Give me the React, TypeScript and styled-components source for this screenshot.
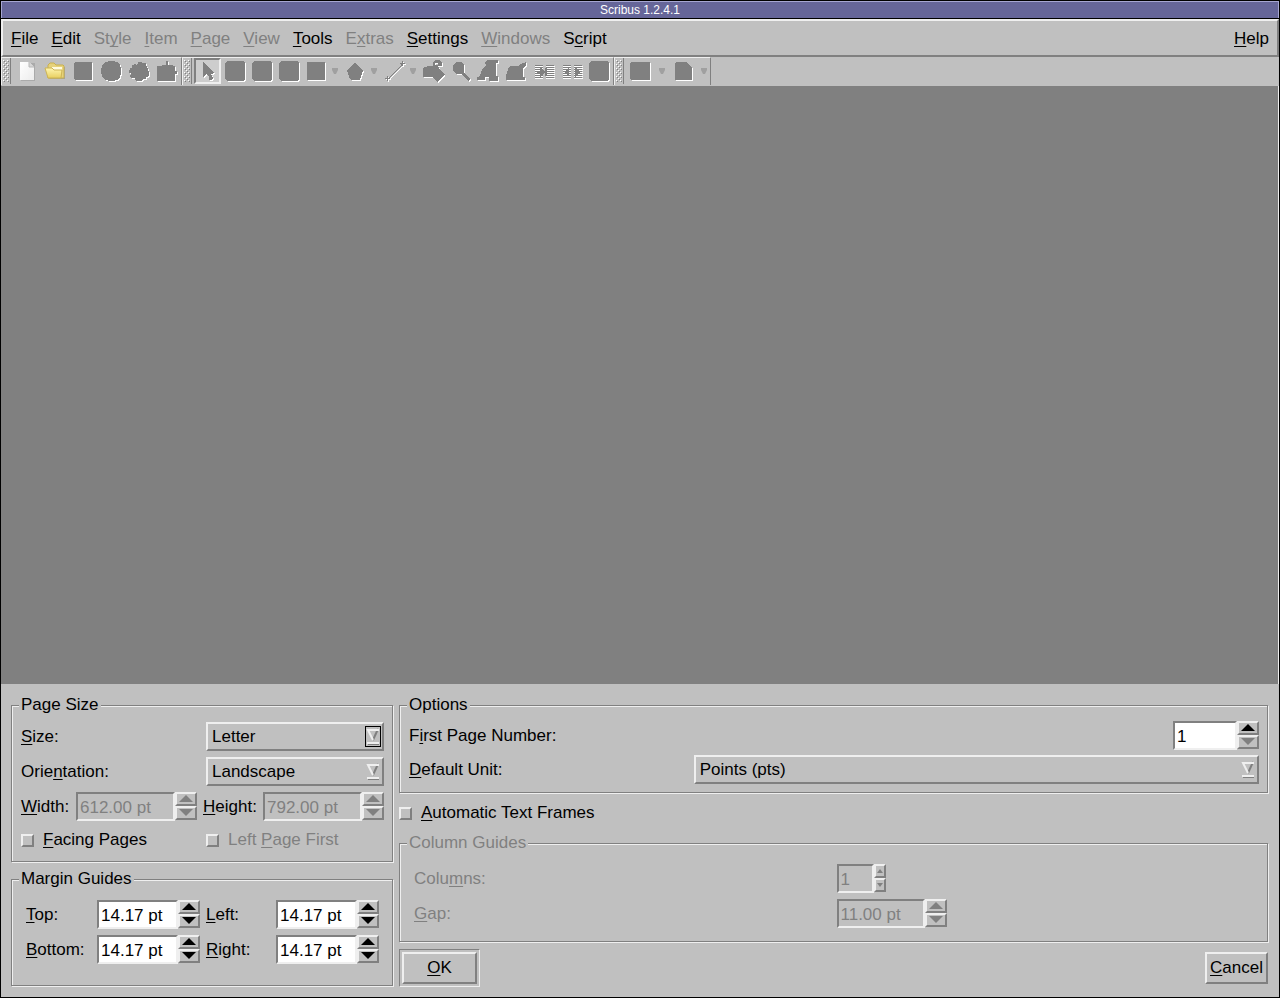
import React, { useState } from "react";
import styled, { createGlobalStyle, css } from "styled-components";

const face = "#c0c0c0";
const light = "#efefef";
const dark = "#808080";

const raised = css`
  border: 2px solid;
  border-color: ${light} ${dark} ${dark} ${light};
`;
const sunken = css`
  border: 2px solid;
  border-color: ${dark} ${light} ${light} ${dark};
`;

const GlobalStyle = createGlobalStyle`
  * { box-sizing: border-box; }
  body { margin: 0; background: ${face}; }
  body, button, input, select {
    font-family: "Liberation Sans", Arial, sans-serif;
    font-size: 17px;
    line-height: 20px;
    color: #000;
  }
  u {
    text-decoration-thickness: 1px;
    text-underline-offset: 2px;
    text-decoration-skip-ink: none;
  }
`;

const Window = styled.div`
  min-height: 100vh;
  display: flex;
  flex-direction: column;
  border: 1px solid #000;
  background: ${face};
`;

const TitleBar = styled.header`
  height: 18px;
  border: 1px solid #a6a6d2;
  background: #666699;
  color: #fff;
  font-size: 12px;
  line-height: 16px;
  text-align: center;
`;

const MenuBar = styled.nav`
  ${raised}
  height: 38px;
  display: flex;
  align-items: center;
  padding: 2px 1px 0 2px;
  box-shadow: 0 -1px 0 #000;
  position: relative;
`;

const MenuButton = styled.button`
  border: 0;
  background: none;
  padding: 0 7px 0 6px;
  &:disabled { color: ${dark}; }
  &:last-child { margin-left: auto; }
`;

const ToolArea = styled.div`
  display: flex;
  height: 29px;
`;

const ToolGroup = styled.div`
  display: flex;
  align-items: flex-start;
  height: 28px;
  border-top: 1px solid ${light};
  border-left: 1px solid ${light};
  border-right: 1px solid ${dark};
`;

const GripBox = styled.div`
  width: 9px;
  height: 26px;
  margin-right: 2px;
  padding: 2px 0 0 1px;
  border-right: 1px solid ${dark};
`;

const ToolButton = styled.button<{ $wide?: boolean; $pressed?: boolean }>`
  width: ${(p) => (p.$wide ? 28 : 27)}px;
  height: 26px;
  padding: 0;
  border: 0;
  background: none;
  display: flex;
  align-items: center;
  justify-content: center;
  & > svg { flex: none; }
  ${(p) => p.$pressed && css`${sunken} background: #cdcdcd;`}
`;

const DropButton = styled.button<{ $wide?: boolean }>`
  width: ${(p) => (p.$wide ? 16 : 12)}px;
  height: 26px;
  padding: 0;
  border: 0;
  background: none;
  display: flex;
  align-items: center;
  justify-content: center;
`;

const Workspace = styled.main`
  flex: 1;
  background: ${dark};
  border-right: 1px solid ${light};
`;

const Dialog = styled.form`
  display: grid;
  grid-template-columns: 382px 1fr;
  gap: 6px;
  align-items: start;
  padding: 11px 11px 10px 10px;
`;

const Column = styled.div`
  display: flex;
  flex-direction: column;
  gap: 7px;
  min-width: 0;
`;

const Group = styled.fieldset`
  min-width: 0;
  margin: 0;
  padding: 0 7px;
  border: 1px solid ${dark};
  box-shadow: inset 1px 1px 0 ${light}, 1px 1px 0 ${light};
  &:disabled { color: ${dark}; }
`;

const Legend = styled.legend`
  padding: 0 2px;
  background: ${face};
`;

const SizeBody = styled.div`
  display: flex;
  flex-direction: column;
  gap: 6px;
  padding: 7px 1px 8px 2px;
`;

const LabelRow = styled.div`
  display: grid;
  grid-template-columns: 185px 1fr;
  align-items: center;
`;

const CheckRow = styled(LabelRow)`
  height: 26px;
`;

const DimensionRow = styled.div`
  display: grid;
  grid-template-columns: 55px 121px 66px 121px;
  align-items: center;
`;

const MarginBody = styled.div`
  display: grid;
  grid-template-columns: 71px 103px 76px 103px;
  row-gap: 6px;
  align-items: center;
  padding: 11px 1px 21px 7px;
`;

const OptionBody = styled.div`
  display: flex;
  flex-direction: column;
  gap: 5px;
  padding: 6px 1px 8px 2px;
`;

const NumberRow = styled.div`
  display: flex;
  align-items: center;
  justify-content: space-between;
`;

const UnitRow = styled.div`
  display: grid;
  grid-template-columns: 1fr 2fr;
  column-gap: 2px;
  align-items: center;
`;

const GuideBody = styled.div`
  display: grid;
  grid-template-columns: 1fr 1fr;
  row-gap: 6px;
  align-items: center;
  padding: 11px 1px 13px 7px;
`;

const FieldLabel = styled.label<{ $indent?: boolean }>`
  white-space: nowrap;
  padding-left: ${(p) => (p.$indent ? 6 : 0)}px;
`;

const CheckLabel = styled.label<{ $off?: boolean }>`
  display: flex;
  align-items: center;
  gap: 9px;
  color: ${(p) => (p.$off ? dark : "#000")};
`;

const CheckBox = styled.input`
  ${raised}
  appearance: none;
  width: 13px;
  height: 13px;
  margin: 0;
  &:checked { ${sunken} background: #a0a0a0; }
`;

const AutoRow = styled.div`
  display: flex;
  padding: 3px 0;
`;

const ComboFrame = styled.div`
  ${raised}
  height: 29px;
  display: grid;
  align-items: center;
  & > * { grid-area: 1 / 1; }
`;

const ComboSelect = styled.select`
  appearance: none;
  width: 100%;
  height: 25px;
  border: 0;
  padding: 0 24px 0 4px;
  background: none;
  outline: 0;
`;

const ComboMark = styled.svg`
  justify-self: end;
  margin-right: 1px;
  pointer-events: none;
`;

const SpinFrame = styled.div<{ $width: number }>`
  display: flex;
  width: ${(p) => p.$width}px;
  height: 29px;
`;

const SpinInput = styled.input`
  ${sunken}
  flex: 1;
  min-width: 0;
  padding: 2px 0 0 2px;
  border-radius: 0;
  background: #fff;
  outline: 0;
  &:disabled { background: ${face}; color: ${dark}; }
`;

const SpinButtons = styled.div<{ $small?: boolean }>`
  width: ${(p) => (p.$small ? 12 : 22)}px;
  display: grid;
  grid-template-rows: 14px 14px;
`;

const SpinButton = styled.button`
  ${raised}
  padding: 0;
  background: ${face};
  color: #000;
  display: flex;
  align-items: center;
  justify-content: center;
  &:disabled { color: ${dark}; }
`;

const Actions = styled.div`
  display: flex;
  justify-content: space-between;
  align-items: center;
`;

const DefaultRing = styled.div`
  border: 1px solid;
  border-color: ${dark} ${light} ${light} ${dark};
  padding: 2px;
`;

const PushButton = styled.button<{ $width: number }>`
  ${raised}
  width: ${(p) => p.$width}px;
  height: 32px;
  padding: 0;
  background: ${face};
`;

/* Text in which one character is the underlined keyboard shortcut. */
function Mnemonic({ text }: { text: string }) {
  const at = text.indexOf("&");
  return (
    <span>
      {text.slice(0, at)}
      <u>{text[at + 1]}</u>
      {text.slice(at + 2)}
    </span>
  );
}

function Arrow({ down, small }: { down?: boolean; small?: boolean }) {
  if (small) {
    return (
      <svg width="6" height="4" viewBox="0 0 6 4">
        <path d={down ? "M0 0H6L3 4Z" : "M0 4H6L3 0Z"} fill="currentColor" />
      </svg>
    );
  }
  return (
    <svg width="14" height="8" viewBox="0 0 14 8">
      <path d={down ? "M0 0H14L7 7Z" : "M0 7H14L7 0Z"} fill="currentColor" />
    </svg>
  );
}

interface SpinProps {
  id: string;
  value: string;
  width: number;
  disabled?: boolean;
  small?: boolean;
  atMin?: boolean;
}

function Spin({ id, value, width, disabled, small, atMin }: SpinProps) {
  const [current, setCurrent] = useState(value);
  const step = (by: number) => {
    const [number, unit] = current.split(" ");
    const next = Number(number) + by;
    setCurrent(unit ? `${next.toFixed(2)} ${unit}` : String(next));
  };
  return (
    <SpinFrame $width={width}>
      <SpinInput id={id} value={current} disabled={disabled} onChange={(e) => setCurrent(e.target.value)} />
      <SpinButtons $small={small}>
        <SpinButton type="button" aria-label="Increase" disabled={disabled} onClick={() => step(1)}>
          <Arrow small={small} />
        </SpinButton>
        <SpinButton
          type="button"
          aria-label="Decrease"
          disabled={disabled || (atMin && current === value)}
          onClick={() => step(-1)}
        >
          <Arrow down small={small} />
        </SpinButton>
      </SpinButtons>
    </SpinFrame>
  );
}

function Combo({ id, options, focused }: { id: string; options: string[]; focused?: boolean }) {
  return (
    <ComboFrame>
      <ComboSelect id={id}>
        {options.map((o) => (
          <option key={o}>{o}</option>
        ))}
      </ComboSelect>
      <ComboMark width="16" height="21" viewBox="0 0 16 21">
        {focused && <rect x="0.5" y="0.5" width="15" height="20" fill="none" stroke="#000" />}
        <path d="M13 3L8 14" fill="none" stroke={dark} strokeWidth="2" />
        <path d="M14 4H3L8 14" fill="none" stroke={light} strokeWidth="2" />
        <path d="M2 16h12v1H3v1H2z" fill={light} />
        <path d="M3 17h11v2H3z" fill={dark} />
        <path d="M3 16h11v2H3z" fill={light} />
      </ComboMark>
    </ComboFrame>
  );
}

const shapes = {
  frame: "M4 3H20L21 4V20L20 21H4L3 20V4Z",
  circle: "M9 2H15L16 3H18L21 6V8L22 9V15L21 16V18L18 21H16L15 22H9L8 21H6L3 18V16L2 15V9L3 8V6L6 3H8Z",
  blob: "M7 5H8L9 6H10V5L11 4V3H15V4H18L19 5V7H20V9H21V12H22V17H21V18H19V20H16V21H15V22H9V21H8V19H4V18H3V16H4V14H2V11H3V9H5V6H7Z",
  puzzle: "M2 22V7H6L7 6H11V2H13V6H17L18 7H20V12H22V15H20V22Z",
  pointer: "M7 3V18L11 15L13 18V21H15L17 19L15 15L19 14Z",
  tile: "M4 2H20L22 4V20L20 22H4L2 20V4Z",
  square: "M3 3H21V21H3Z",
  pentagon: "M11 4H13L20 12L17 20L16 21H8L7 20L4 12Z",
  line: "M5 18V17H6V19L19 6V5H18V4H20V2H21V4H23V5H21V7H20V6L7 19H8V20H6V22H5V20H3V19H5Z",
  rotate: "M2 9L3 8H6V7H9L14 6H17L18 10L20 11L24 16L16 23L11 18H2ZM11 4L14 1H18L20 3L21 3V7H17V5L16 4H14V6H12V4Z",
  lens: "M7 3H12L15 6V12L14 13L21 20L19 22L12 15H7L4 12V6Z",
  text: "M1 21V18H3L7 9L10 6L9 5V3L11 1H22V4H20V17H22V22H13V18H9V21Z",
  edit: "M2 21V16L5 8L7 7H15L16 5L20 4L22 2V6L19 9V18H21V21Z",
  wide: "M3 3H21L22 4V20L21 21H3L2 20V4Z",
  note: "M4 3H14L20 9V21H3V4Z",
};
const striped = [6, 8, 10, 12, 14, 16, 18];

function DisabledIcon({ name }: { name: keyof typeof shapes }) {
  return (
    <svg width="24" height="24" viewBox="0 0 24 24" shapeRendering="crispEdges">
      <path d={shapes[name]} fill="#fff" transform="translate(1 1)" />
      <path d={shapes[name]} fill={dark} />
    </svg>
  );
}

function LinkIcon({ apart }: { apart?: boolean }) {
  return (
    <svg width="24" height="24" viewBox="0 0 24 24" shapeRendering="crispEdges">
      {striped.map((y) => (
        <g key={y}>
          <path d={`M3 ${y + 1}h8v1H3zM14 ${y + 1}h9v1h-9z`} fill="#fff" />
          <path d={`M3 ${y}h8v1H3zM14 ${y}h8v1h-8z`} fill={dark} />
        </g>
      ))}
      {apart ? (
        <path d="M9 8V18L4 13ZM15 8V18L20 13Z" fill={dark} />
      ) : (
        <path d="M8 8L13 13L8 18V14H5V12H8ZM13 9h2v8h-2z" fill={dark} />
      )}
    </svg>
  );
}

/* Drag handle: three staggered columns of embossed dots. */
function Grip() {
  const dots: [number, number][] = [];
  for (let y = 0; y < 22; y += 4) {
    dots.push([0, y], [4, y]);
    if (y < 20) dots.push([2, y + 2]);
  }
  return (
    <GripBox>
      <svg width="6" height="23" viewBox="0 0 6 23" shapeRendering="crispEdges" display="block">
        {dots.map(([x, y]) => (
          <g key={`${x}-${y}`}>
            <path d={`M${x} ${y}h1v1h-1z`} fill="#fff" />
            <path d={`M${x + 1} ${y + 1}h1v1h-1z`} fill={dark} />
          </g>
        ))}
      </svg>
    </GripBox>
  );
}

const NewIcon = () => (
  <svg width="24" height="24" viewBox="0 0 24 24">
    <defs>
      <linearGradient id="sheet" x1="0" y1="0" x2="1" y2="1">
        <stop offset="0" stopColor="#fff" />
        <stop offset="1" stopColor="#ececec" />
      </linearGradient>
    </defs>
    <path d="M6 4H20V22H6Z" fill="#aaa" />
    <path d="M5 3H14L19 8V21H5Z" fill="url(#sheet)" />
    <path d="M14 3L19 8H14Z" fill="#d6d6d6" />
    <path d="M14 3V8H19" fill="none" stroke="#b8b8b8" />
  </svg>
);

const OpenIcon = () => (
  <svg width="24" height="24" viewBox="0 0 24 24">
    <defs>
      <linearGradient id="folder" x1="0" y1="0" x2="0" y2="1">
        <stop offset="0" stopColor="#fff6b0" />
        <stop offset="1" stopColor="#e8cf60" />
      </linearGradient>
    </defs>
    <path d="M6 19H21V8H22V20H7Z" fill="#a0a0a0" />
    <path d="M5 19V6L7 4H11L13 6H20L21 7V19Z" fill="#e6d27c" stroke="#c9b04c" />
    <path d="M9 8H19V11H9Z" fill="#fffbe0" />
    <path d="M2 9H9L11 11H19L18 19H5Z" fill="url(#folder)" stroke="#cdb455" />
  </svg>
);

const DropArrow = () => (
  <svg width="6" height="6" viewBox="0 0 6 6">
    <path d="M0 0H6V2L4 6H2L0 2Z" fill="#a0a0a0" />
  </svg>
);

function Tool({ label, icon, wide, pressed }: { label: string; icon: keyof typeof shapes; wide?: boolean; pressed?: boolean }) {
  return (
    <ToolButton type="button" aria-label={label} disabled $wide={wide} $pressed={pressed}>
      <DisabledIcon name={icon} />
    </ToolButton>
  );
}

function Drop({ label, wide }: { label: string; wide?: boolean }) {
  return (
    <DropButton type="button" aria-label={label} disabled $wide={wide}>
      <DropArrow />
    </DropButton>
  );
}

const menus: [string, boolean][] = [
  ["&File", true],
  ["&Edit", true],
  ["St&yle", false],
  ["&Item", false],
  ["&Page", false],
  ["&View", false],
  ["&Tools", true],
  ["E&xtras", false],
  ["&Settings", true],
  ["&Windows", false],
  ["S&cript", true],
  ["&Help", true],
];

export default function App() {
  return (
    <Window>
      <GlobalStyle />
      <TitleBar>Scribus 1.2.4.1</TitleBar>
      <MenuBar>
        {menus.map(([text, enabled]) => (
          <MenuButton key={text} type="button" disabled={!enabled}>
            <Mnemonic text={text} />
          </MenuButton>
        ))}
      </MenuBar>
      <ToolArea>
        <ToolGroup>
          <Grip />
          <ToolButton type="button" aria-label="New" $wide>
            <NewIcon />
          </ToolButton>
          <ToolButton type="button" aria-label="Open" $wide>
            <OpenIcon />
          </ToolButton>
          <Tool label="Save" icon="frame" wide />
          <Tool label="Close" icon="circle" wide />
          <Tool label="Print" icon="blob" wide />
          <Tool label="Export as PDF" icon="puzzle" wide />
        </ToolGroup>
        <ToolGroup>
          <Grip />
          <Tool label="Select" icon="pointer" pressed />
          <Tool label="Text frame" icon="tile" />
          <Tool label="Picture frame" icon="tile" />
          <Tool label="Table" icon="tile" />
          <Tool label="Shape" icon="square" />
          <Drop label="Shape kinds" />
          <Tool label="Polygon" icon="pentagon" />
          <Drop label="Polygon options" />
          <Tool label="Line" icon="line" />
          <Drop label="Line kinds" />
          <Tool label="Rotate" icon="rotate" wide />
          <Tool label="Zoom" icon="lens" />
          <Tool label="Edit contents" icon="text" wide />
          <Tool label="Edit text" icon="edit" wide />
          <ToolButton type="button" aria-label="Link frames" disabled $wide>
            <LinkIcon />
          </ToolButton>
          <ToolButton type="button" aria-label="Unlink frames" disabled>
            <LinkIcon apart />
          </ToolButton>
          <Tool label="Measure" icon="tile" wide />
        </ToolGroup>
        <ToolGroup>
          <Grip />
          <Tool label="PDF field" icon="wide" wide />
          <Drop label="PDF field kinds" wide />
          <Tool label="PDF note" icon="note" wide />
          <Drop label="PDF note kinds" />
        </ToolGroup>
      </ToolArea>
      <Workspace />
      <Dialog onSubmit={(e) => e.preventDefault()}>
        <Column>
          <Group>
            <Legend>Page Size</Legend>
            <SizeBody>
              <LabelRow>
                <FieldLabel htmlFor="size"><Mnemonic text="&Size:" /></FieldLabel>
                <Combo id="size" options={["Letter", "A4", "Legal"]} focused />
              </LabelRow>
              <LabelRow>
                <FieldLabel htmlFor="orientation"><Mnemonic text="Orie&ntation:" /></FieldLabel>
                <Combo id="orientation" options={["Landscape", "Portrait"]} />
              </LabelRow>
              <DimensionRow>
                <FieldLabel htmlFor="width"><Mnemonic text="&Width:" /></FieldLabel>
                <Spin id="width" value="612.00 pt" width={121} disabled />
                <FieldLabel htmlFor="height" $indent><Mnemonic text="&Height:" /></FieldLabel>
                <Spin id="height" value="792.00 pt" width={121} disabled />
              </DimensionRow>
              <CheckRow>
                <CheckLabel><CheckBox type="checkbox" /><Mnemonic text="&Facing Pages" /></CheckLabel>
                <CheckLabel $off><CheckBox type="checkbox" disabled /><Mnemonic text="Left &Page First" /></CheckLabel>
              </CheckRow>
            </SizeBody>
          </Group>
          <Group>
            <Legend>Margin Guides</Legend>
            <MarginBody>
              <FieldLabel htmlFor="top"><Mnemonic text="&Top:" /></FieldLabel>
              <Spin id="top" value="14.17 pt" width={103} />
              <FieldLabel htmlFor="left" $indent><Mnemonic text="&Left:" /></FieldLabel>
              <Spin id="left" value="14.17 pt" width={103} />
              <FieldLabel htmlFor="bottom"><Mnemonic text="&Bottom:" /></FieldLabel>
              <Spin id="bottom" value="14.17 pt" width={103} />
              <FieldLabel htmlFor="right" $indent><Mnemonic text="&Right:" /></FieldLabel>
              <Spin id="right" value="14.17 pt" width={103} />
            </MarginBody>
          </Group>
        </Column>
        <Column>
          <Group>
            <Legend>Options</Legend>
            <OptionBody>
              <NumberRow>
                <FieldLabel htmlFor="first"><Mnemonic text="F&irst Page Number:" /></FieldLabel>
                <Spin id="first" value="1" width={86} atMin />
              </NumberRow>
              <UnitRow>
                <FieldLabel htmlFor="unit"><Mnemonic text="&Default Unit:" /></FieldLabel>
                <Combo id="unit" options={["Points (pts)", "Millimetres (mm)", "Inches (in)", "Picas (p)"]} />
              </UnitRow>
            </OptionBody>
          </Group>
          <AutoRow>
            <CheckLabel><CheckBox type="checkbox" /><Mnemonic text="&Automatic Text Frames" /></CheckLabel>
          </AutoRow>
          <Group disabled>
            <Legend>Column Guides</Legend>
            <GuideBody>
              <FieldLabel htmlFor="columns"><Mnemonic text="Colu&mns:" /></FieldLabel>
              <Spin id="columns" value="1" width={49} disabled small />
              <FieldLabel htmlFor="gap"><Mnemonic text="&Gap:" /></FieldLabel>
              <Spin id="gap" value="11.00 pt" width={110} disabled />
            </GuideBody>
          </Group>
          <Actions>
            <DefaultRing>
              <PushButton type="submit" $width={75}><Mnemonic text="&OK" /></PushButton>
            </DefaultRing>
            <PushButton type="button" $width={63}><Mnemonic text="&Cancel" /></PushButton>
          </Actions>
        </Column>
      </Dialog>
    </Window>
  );
}
